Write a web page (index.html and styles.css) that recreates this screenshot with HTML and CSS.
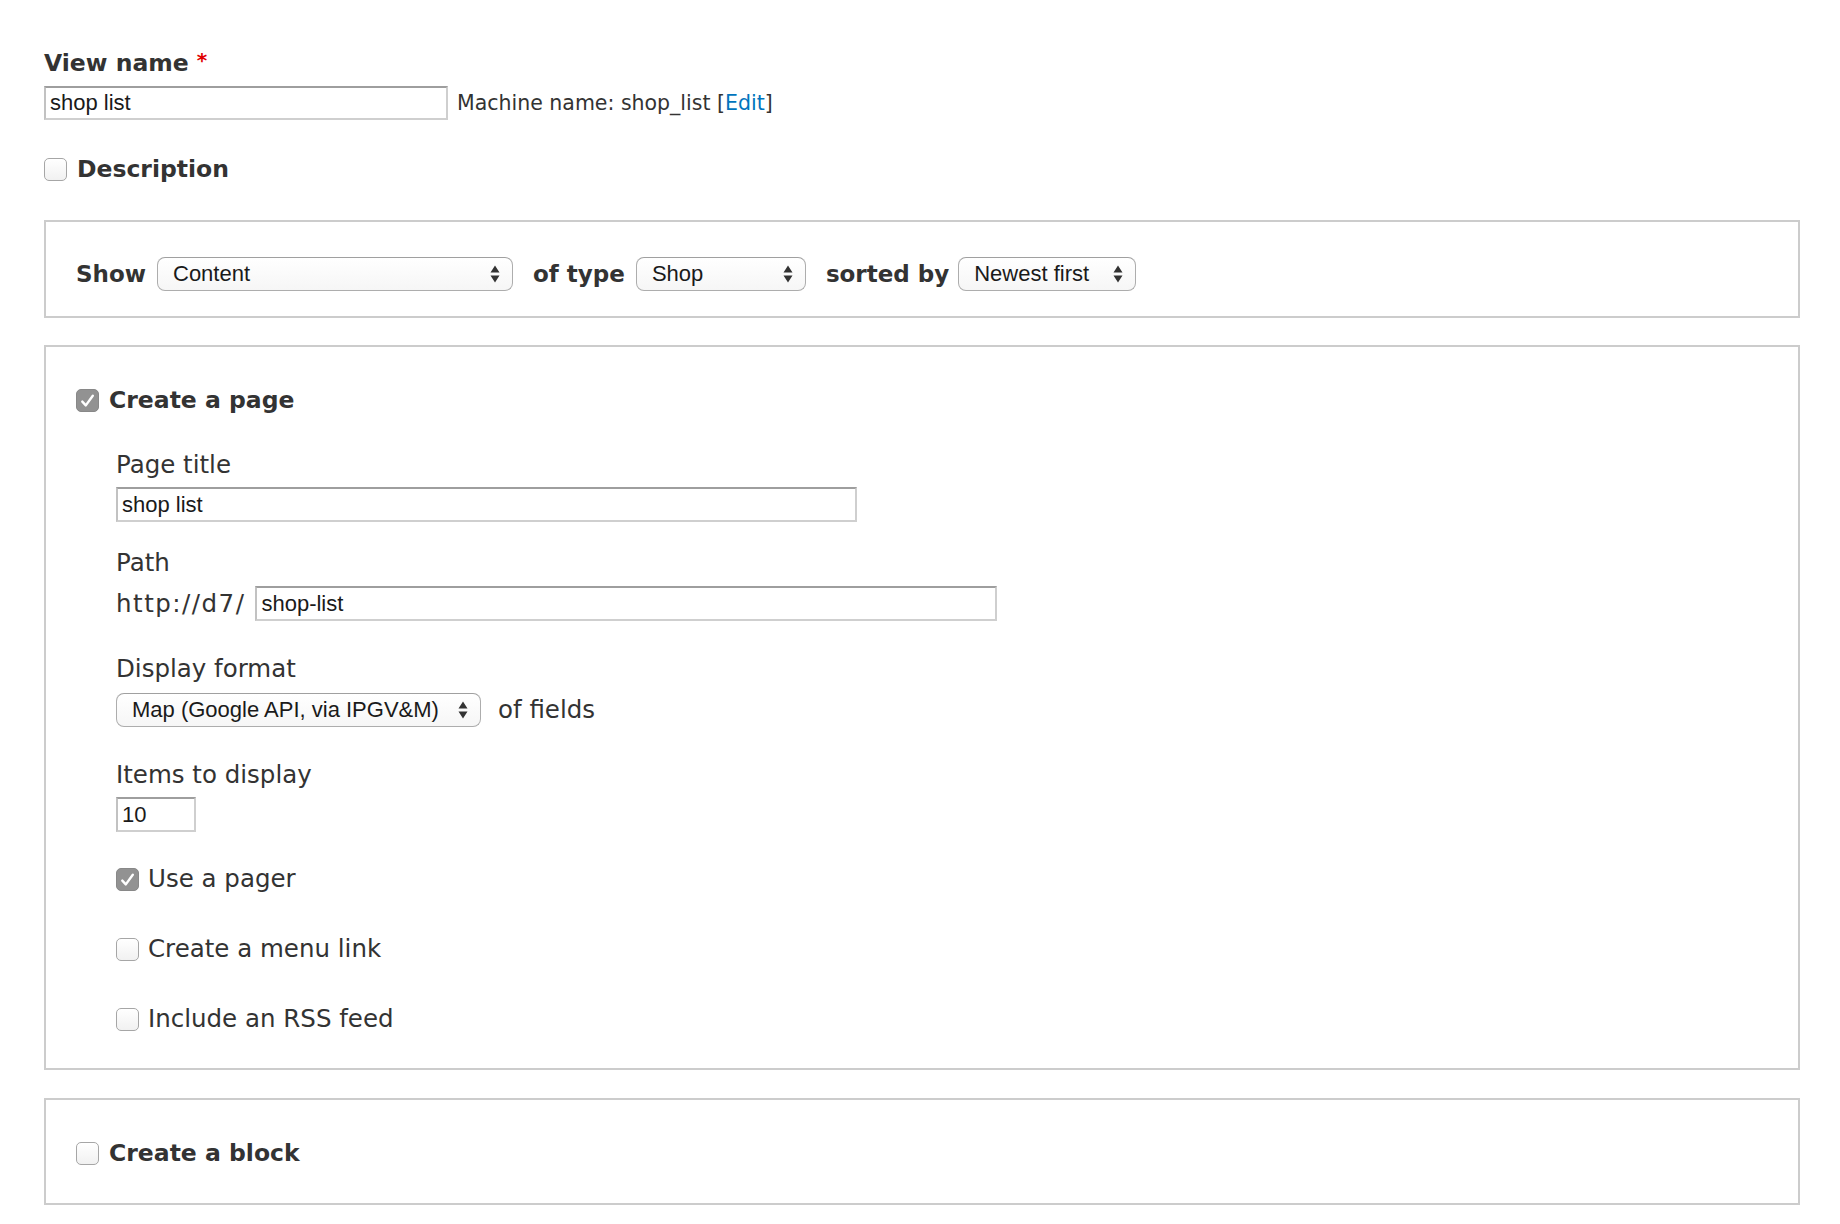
FILE: index.html
```html
<!DOCTYPE html>
<html lang="en">
<head>
<meta charset="utf-8">
<title>Add view</title>
<link rel="stylesheet" href="styles.css">
</head>
<body>
<div class="page">
  <div class="label-bold">View name <span class="req">*</span></div>
  <div class="name-row">
    <div class="text-input w-name">shop list</div>
    <span class="machine">Machine name: shop_list [<a href="#" class="link">Edit</a>]</span>
  </div>

  <div class="check-row top-check">
    <span class="cb"></span>
    <span class="label-bold">Description</span>
  </div>

  <div class="box box-show">
    <div class="show-row">
      <span class="label-bold sm">Show</span>
      <div class="select w-content"><span>Content</span><svg class="arrows" width="10" height="18" viewBox="0 0 10 18"><path d="M0.5 7.5 L5 0.5 L9.5 7.5 Z M0.5 10.5 L5 17.5 L9.5 10.5 Z"/></svg></div>
      <span class="label-bold sm">of type</span>
      <div class="select w-shop"><span>Shop</span><svg class="arrows" width="10" height="18" viewBox="0 0 10 18"><path d="M0.5 7.5 L5 0.5 L9.5 7.5 Z M0.5 10.5 L5 17.5 L9.5 10.5 Z"/></svg></div>
      <span class="label-bold sm sorted">sorted by</span>
      <div class="select w-newest"><span>Newest first</span><svg class="arrows" width="10" height="18" viewBox="0 0 10 18"><path d="M0.5 7.5 L5 0.5 L9.5 7.5 Z M0.5 10.5 L5 17.5 L9.5 10.5 Z"/></svg></div>
    </div>
  </div>

  <div class="box box-page">
    <div class="check-row">
      <span class="cb checked"><svg width="23" height="23" viewBox="0 0 23 23"><path d="M6.3 12.6 L9.8 16.4 L16.8 6.8" fill="none" stroke="#fff" stroke-width="2.4" stroke-linecap="round" stroke-linejoin="round"/></svg></span>
      <span class="label-bold">Create a page</span>
    </div>
    <div class="inner">
      <div class="label first">Page title</div>
      <div class="text-input w-title">shop list</div>

      <div class="label path-label">Path</div>
      <div class="path-row">
        <span class="label url">http://d7/</span>
        <div class="text-input w-path">shop-list</div>
      </div>

      <div class="label sect">Display format</div>
      <div class="format-row">
        <div class="select w-map"><span>Map (Google API, via IPGV&amp;M)</span><svg class="arrows" width="10" height="18" viewBox="0 0 10 18"><path d="M0.5 7.5 L5 0.5 L9.5 7.5 Z M0.5 10.5 L5 17.5 L9.5 10.5 Z"/></svg></div>
        <span class="label">of fields</span>
      </div>

      <div class="label sect">Items to display</div>
      <div class="text-input w-items">10</div>

      <div class="check-row opt first-opt">
        <span class="cb checked"><svg width="23" height="23" viewBox="0 0 23 23"><path d="M6.3 12.6 L9.8 16.4 L16.8 6.8" fill="none" stroke="#fff" stroke-width="2.4" stroke-linecap="round" stroke-linejoin="round"/></svg></span>
        <span class="label">Use a pager</span>
      </div>
      <div class="check-row opt">
        <span class="cb"></span>
        <span class="label">Create a menu link</span>
      </div>
      <div class="check-row opt">
        <span class="cb"></span>
        <span class="label">Include an RSS feed</span>
      </div>
    </div>
  </div>

  <div class="box box-block">
    <div class="check-row">
      <span class="cb"></span>
      <span class="label-bold">Create a block</span>
    </div>
  </div>
</div>
</body>
</html>
```

FILE: styles.css
```css
html, body {
  margin: 0;
  padding: 0;
  background: #fff;
}

.page {
  padding: 49px 40px 0 44px;
  color: #333;
  font-family: "DejaVu Sans", Verdana, sans-serif;
}

.label-bold {
  font-weight: bold;
  font-size: 23.5px;
  line-height: 28px;
  color: #333;
}

.label-bold.sm {
  font-size: 23px;
}

.req {
  color: #e00000;
  font-size: 20px;
  vertical-align: top;
  line-height: 22px;
}

.label {
  font-size: 24.5px;
  line-height: 30px;
  color: #333;
}

.name-row {
  display: flex;
  align-items: center;
  margin-top: 9px;
}

.machine {
  font-size: 20.5px;
  line-height: 28px;
  margin-left: 9px;
  color: #333;
}

.link {
  color: #0074bd;
  text-decoration: none;
}

.text-input {
  box-sizing: border-box;
  height: 35px;
  border: 2px solid #cfcfcf;
  border-top-color: #9e9e9e;
  border-left-color: #c2c2c2;
  padding: 0 6px 0 4px;
  font-family: "Liberation Sans", Arial, sans-serif;
  font-size: 22px;
  line-height: 31px;
  color: #1a1a1a;
  background: #fff;
  white-space: nowrap;
}

.w-name { width: 404px; height: 34px; line-height: 30px; }
.w-title { width: 741px; margin-top: 7.5px; }
.w-path { width: 742px; }
.w-items { width: 80px; margin-top: 7.5px; }

.check-row {
  display: flex;
  align-items: center;
  gap: 10px;
}

.top-check {
  margin-top: 35px;
}

.cb {
  box-sizing: border-box;
  width: 23px;
  height: 23px;
  flex: none;
  border: 1.5px solid #a6a6a6;
  border-radius: 5px;
  background: linear-gradient(#ffffff, #f1f1f1);
  display: flex;
  align-items: center;
  justify-content: center;
}

.cb.checked {
  background: #929292;
  border-color: #888888;
}

.cb.checked svg {
  display: block;
  flex: none;
}

.box {
  border: 2px solid #cccccc;
  background: #fff;
}

.box-show {
  margin-top: 37px;
  padding: 35px 30px 25px;
}

.show-row {
  display: flex;
  align-items: center;
}

.show-row .label-bold {
  margin-right: 11px;
}

.show-row .label-bold.sorted {
  margin-right: 9px;
}

.show-row .select {
  margin-right: 20px;
}

.select {
  box-sizing: border-box;
  height: 34px;
  border: 1.5px solid #adadad;
  border-top-color: #a0a0a0;
  border-radius: 8px;
  background: linear-gradient(#ffffff, #f6f6f6);
  display: flex;
  align-items: center;
  justify-content: space-between;
  padding: 0 12px 0 15px;
  font-family: "Liberation Sans", Arial, sans-serif;
  font-size: 22px;
  color: #1a1a1a;
  white-space: nowrap;
  flex: none;
}

.select .arrows {
  display: block;
  fill: #333;
  flex: none;
}

.w-content { width: 356px; }
.w-shop { width: 170px; }
.w-newest { width: 178px; }
.w-map { width: 365px; height: 34px; }

.box-page {
  margin-top: 27px;
  padding: 39px 30px 34px;
}

.inner {
  margin-left: 40px;
}

.label.first {
  margin-top: 35.5px;
}

.path-label {
  margin-top: 25.5px;
}

.path-row {
  display: flex;
  align-items: center;
  margin-top: 8.5px;
}

.url {
  letter-spacing: 1.5px;
  margin-right: 10px;
}

.label.sect {
  margin-top: 32.5px;
}

.format-row {
  display: flex;
  align-items: center;
  gap: 17px;
  margin-top: 9.5px;
}

.opt {
  margin-top: 40px;
  gap: 9px;
}

.opt.first-opt {
  margin-top: 32px;
}

.box-block {
  margin-top: 28px;
  padding: 39px 30px 36px;
}
```
